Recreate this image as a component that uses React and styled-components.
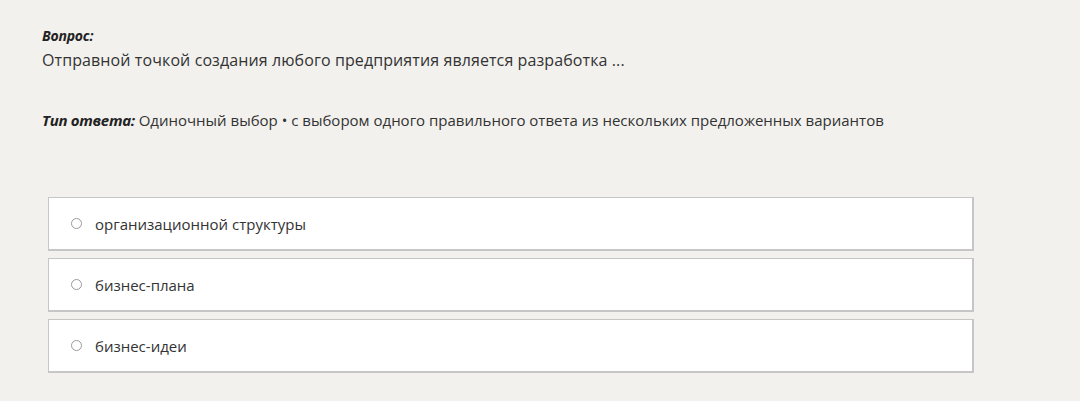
import React from "react";
import styled, { createGlobalStyle } from "styled-components";

const Global = createGlobalStyle`
  html, body { margin: 0; padding: 0; background: #f2f1ee; }
  body { font-family: "Open Sans", "Liberation Sans", sans-serif; color: #333; }
`;

const Page = styled.div`
  padding: 26px 0 0 42px;
  width: 1080px;
  height: 401px;
  box-sizing: border-box;
`;

const Label = styled.div`
  font-size: 14px;
  font-weight: 700;
  font-style: italic;
  color: #222;
  line-height: 20px;
  letter-spacing: -0.2px;
`;

const Question = styled.div`
  font-size: 16px;
  line-height: 24px;
  color: #333;
  margin-top: 2px;
  letter-spacing: 0.1px;
`;

const TypeLine = styled.div`
  margin-top: 37px;
  font-size: 15px;
  line-height: 22px;
  color: #333;
`;

const TypeLabel = styled.span`
  font-weight: 700;
  font-style: italic;
  color: #222;
  letter-spacing: -0.3px;
`;

const Options = styled.div`
  margin-top: 66px;
  margin-left: 6px;
  width: 926px;
  display: flex;
  flex-direction: column;
  gap: 7px;
`;

const Option = styled.label`
  display: flex;
  align-items: center;
  height: 54px;
  box-sizing: border-box;
  background: #fff;
  border: 1px solid #c6c6c6;
  border-bottom-width: 2px;
  border-right-width: 2px;
  padding-left: 22px;
  cursor: pointer;
`;

const Radio = styled.span`
  width: 11px;
  height: 11px;
  border-radius: 50%;
  border: 1.5px solid #9a9a9a;
  box-sizing: border-box;
  flex: none;
  margin-right: 13px;
`;

const OptionText = styled.span`
  font-size: 15px;
  color: #333;
`;

const options = ["организационной структуры", "бизнес-плана", "бизнес-идеи"];

export default function App() {
  return (
    <>
      <Global />
      <Page>
        <Label>Вопрос:</Label>
        <Question>Отправной точкой создания любого предприятия является разработка ...</Question>
        <TypeLine>
          <TypeLabel>Тип ответа:</TypeLabel> Одиночный выбор • с выбором одного правильного ответа из нескольких предложенных вариантов
        </TypeLine>
        <Options>
          {options.map((o) => (
            <Option key={o}>
              <Radio />
              <OptionText>{o}</OptionText>
            </Option>
          ))}
        </Options>
      </Page>
    </>
  );
}
